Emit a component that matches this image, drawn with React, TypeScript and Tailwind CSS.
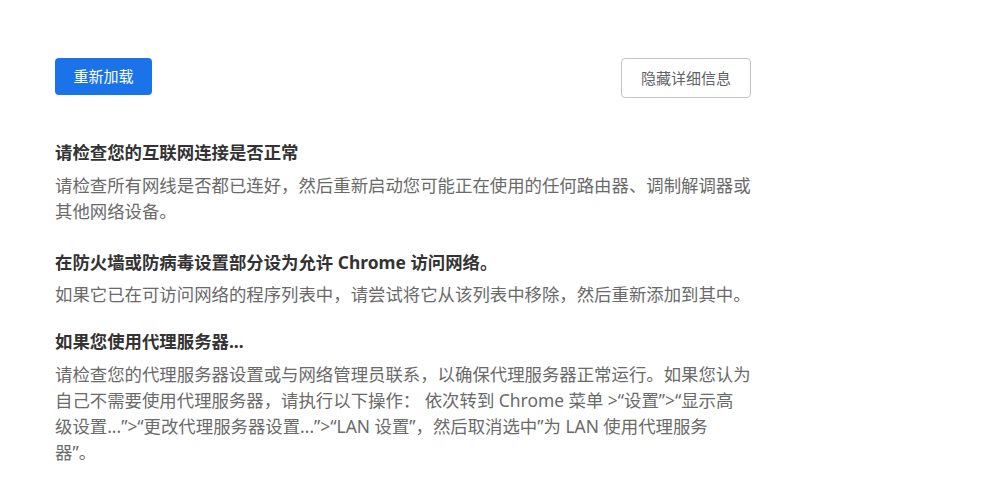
import React from "react";

const font = { fontFamily: '"Noto Sans", "Noto Sans CJK SC", sans-serif' };

export default function App() {
  return (
    <div className="w-[1000px] h-[500px] bg-white overflow-hidden" style={font}>
      <div className="w-[696px] ml-[55px] pt-[58px]">
        <div className="flex justify-between items-start">
          <button className="h-[37px] w-[97px] rounded-[4px] bg-[#1a73e8] text-white text-[15px] leading-none">
            重新加载
          </button>
          <button className="h-[40px] w-[130px] rounded-[4px] border border-[#c4c4c4] bg-white text-[#5f6368] text-[15px] leading-none">
            隐藏详细信息
          </button>
        </div>
        <div className="mt-[41px] text-[17.4px] leading-[26px]">
          <div className="font-bold text-[#333333]">请检查您的互联网连接是否正常</div>
          <p className="mt-[7px] text-[#6a6a6a]">
            请检查所有网线是否都已连好，然后重新启动您可能正在使用的任何路由器、调制解调器或其他网络设备。
          </p>
          <div className="mt-[25px] font-bold text-[#333333]">在防火墙或防病毒设置部分设为允许 Chrome 访问网络。</div>
          <p className="mt-[6px] text-[#6a6a6a]">
            如果它已在可访问网络的程序列表中，请尝试将它从该列表中移除，然后重新添加到其中。
          </p>
          <div className="mt-[21px] font-bold text-[#333333]">如果您使用代理服务器...</div>
          <p className="mt-[7px] text-[#6a6a6a]">
            请检查您的代理服务器设置或与网络管理员联系，以确保代理服务器正常运行。如果您认为
            <br />
            自己不需要使用代理服务器，请执行以下操作： 依次转到 Chrome 菜单 &gt;“设置”&gt;“显示高
            <br />
            级设置...”&gt;“更改代理服务器设置...”&gt;“LAN 设置”，然后取消选中”为 LAN 使用代理服务
            <br />
            器”。
          </p>
        </div>
      </div>
    </div>
  );
}
